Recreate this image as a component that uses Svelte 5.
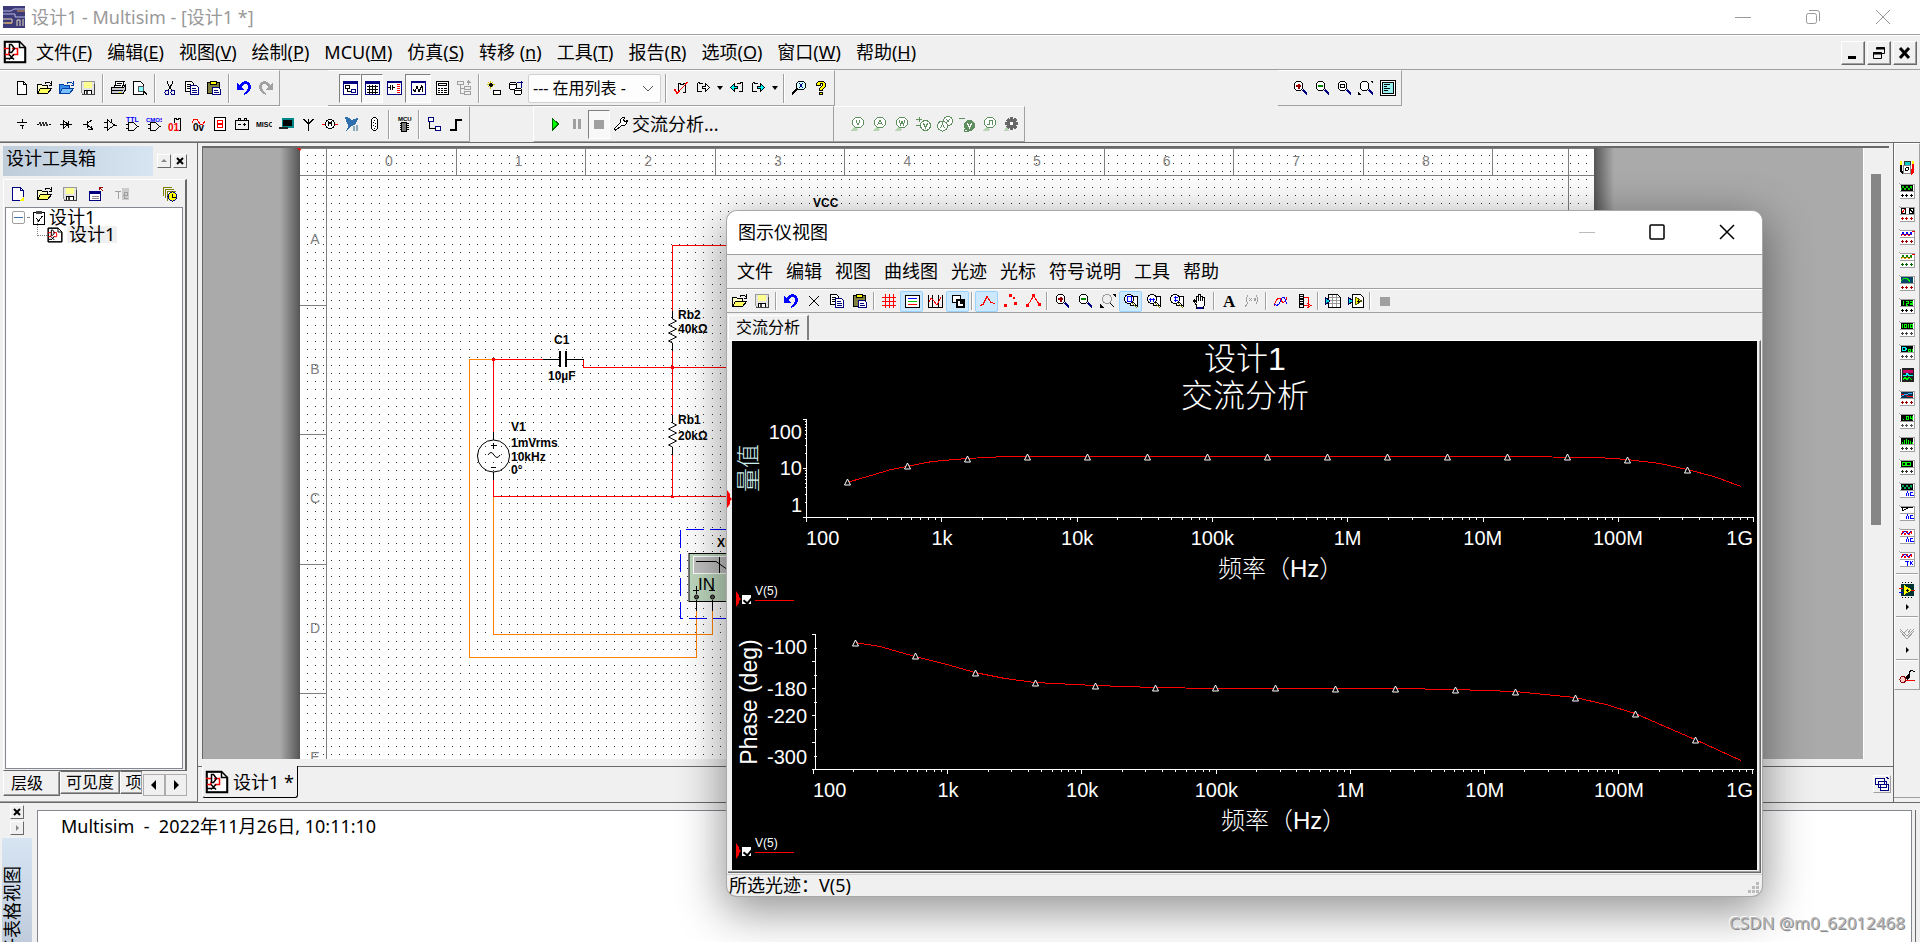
<script lang="ts">
  type Shape = [d: string, fill?: string, stroke?: string];
  type Label = { t: string; x: number; y: number; s: number; c: string };

  const RED = "#f00";
  const NAVY = "#000080";
  const GRAY = "#a0a0a0";
  const GREEN = "#5f8f5f";

  const circle = (x: number, y: number, r: number) =>
    `M${x - r} ${y}a${r} ${r} 0 1 0 ${2 * r} 0a${r} ${r} 0 1 0 ${-2 * r} 0`;

  const lens = (extra: Shape[]): Shape[] => [
    [circle(6.5, 6, 4.5), "#fff", "#000"],
    ["M10 10l1-1l4 4v2h-1l-4-4z", NAVY, "none"],
    ...extra,
  ];

  const pageLens = (extra: Shape[]): Shape[] => [
    ["M7.5 3.5h7v9h-7z", "#fff", "#000"],
    [circle(6, 6, 4.5), "#fff", "#000"],
    ["M9 10l5 5", "none", "#888800"],
    ["M10 9l5 5", "none", "#000"],
    ...extra,
  ];

  const probe = (extra: Shape[]): Shape[] => [
    ["M1 15l5-5l3 4l-2 1z", "#b5d6b0", "none"],
    [circle(9, 6.5, 5.5), "#fff", GREEN],
    ...extra,
  ];

  // front panel of a bench instrument: screen on top, terminals below
  const panel = (screen: string, extra: Shape[]): Shape[] => [
    ["M1 1h15v15h-15z", "#fff", "none"],
    ["M0 0h1v1h-1zM1 1h15v1h-15zM15 1h1v15h-1zM1 15h15v1h-15zM1 8h15v1h-15z", GRAY, "none"],
    ["M2 2h12v6h-12z", screen, "none"],
    ...extra,
  ];
  const pins = (color: string): Shape => [
    "M2 12h3v1h-3zM3 11h1v3h-1zM6 12h3v1h-3zM7 11h1v3h-1zM11 12h3v1h-3zM12 11h1v3h-1z",
    color,
    "none",
  ];
  const wave = "M2 6.5l2-3l2 3l2-3l2 3l2-3l1 2";
  const agilent = "M7 14l1.5-4l1.5 4M14 10.5h-2.5v3h2.5v-1";

  const icons: Record<string, Shape[]> = {
    sheet: [
      ["M1.5 1.5h15l6 6v15h-21z", "#fff", "#000"],
      ["M16.5 1.5v6h6M2 2h15M2 22h20M22 8v14M2 2v20"],
      ["M1 8.5h5M9 8.5h5.5v6h-5M2 14.5h4v-3", "none", RED],
      ["M6.5 4.5h2l3 4l-3 4h-2zM6 14.5l5 5M6 19.5l5-5M2 18.5h5"],
    ],
    new: [["M3.5 1.5h6l3 3v10h-9z", "#fff", "#000"], ["M9.5 1.5v3h3"]],
    newDoc: [["M2.5 1.5h8l3 3v10h-11z", "#fff", NAVY], ["M10.5 1.5v3h3", "none", NAVY], ["M9 15l5-5v5z", "#ff0", "none"]],
    open: [
      ["M1.5 13.5v-9h4l1 1h5v3", "#ffffc8", "#000"],
      ["M1.5 13.5l3-5h11l-4 5z", "#ffff60", "#000"],
      ["M9 3.5l2-1.5h2l2 2M15.5 1v4h-3"],
    ],
    openBlue: [
      ["M1.5 13.5v-9h4l1 1h5v3", "#3a8ce8", "#0040a0"],
      ["M1.5 13.5l3-5h11l-4 5z", "#7cc0ff", "#0040a0"],
      ["M9 3.5l2-1.5h2l2 2M15.5 1v4h-3", "none", "#0040a0"],
    ],
    save: [
      ["M1.5 1.5h13v13h-11l-2-2z", "#e4e4e4", "#999"],
      ["M4 2h8v6h-8z", "#ffff90", "none"],
      ["M4.5 10.5h7v4h-7z", "#fff", "#000"],
      ["M6 11h2v3h-2zM2 14h13v1h-13zM14 4h1v11h-1z", "#444", "none"],
    ],
    print: [
      ["M4.5 7.5l1.5-6h8l-1.5 6", "#fff", "#000"],
      ["M1.5 7.5h12l1.5-2v5l-2 3h-11.5z", "#ccc", "#000"],
      ["M2 10.5h11M4 13.5h8M6.5 3.5h5M6 5.5h5"],
      ["M9 12h2v1h-2z", "#ff0", "none"],
    ],
    preview: [
      ["M1.5 1.5h7l3 3v10h-10z", "#fff", "#000"],
      [circle(9, 9, 3), "#8ff", "#555"],
      ["M11 11l4 4M12 11l3 3"],
    ],
    cut: [["M5.5 1v2l4 7M10.5 1v2l-4 7"], [circle(5, 12.5, 2), "none", NAVY], [circle(11, 12.5, 2), "none", NAVY]],
    copy: [
      ["M1.5 1.5h6l2 2v8h-8z", "#fff", "#000"],
      ["M3 4.5h4M3 6.5h4M3 8.5h4"],
      ["M6.5 5.5h6l2 2v7h-8z", "#fff", NAVY],
      ["M8 8.5h4M8 10.5h5M8 12.5h5", "none", NAVY],
    ],
    paste: [
      ["M1.5 2.5h12v11h-12z", "#808040", "#000"],
      ["M4.5 1.5h6v3h-6z", "#ff0", "#000"],
      ["M6.5 7.5h6l2 2v5h-8z", "#fff", NAVY],
      ["M8 10.5h4M8 12.5h5", "none", NAVY],
    ],
    undo: [["M1 3v7h7l-2-3q1-3 4-3q3 1 2 4q-1 3-4 5v2q6-2 7-7q0-6-5-7q-4 0-6 4z", "#00f", "none"]],
    redo: [["M15 3v7h-7l2-3q-1-3-4-3q-3 1-2 4q1 3 4 5v2q-6-2-7-7q0-6 5-7q4 0 6 4z", GRAY, "none"]],
    toolbox: [
      ["M1.5 1.5h14v13h-14z", "#fff", NAVY],
      ["M1 1h15v3h-15z", NAVY, "none"],
      ["M3.5 5.5h4v3h-4zM5.5 9v2.5h4"],
      ["M9.5 9.5h4v3h-4z", "none", NAVY],
    ],
    grid: [
      ["M1.5 1.5h14v13h-14z", "#fff", NAVY],
      ["M1 1h15v3h-15z", NAVY, "none"],
      ["M3 6.5h11M3 9.5h11M3 12.5h11M5.5 5v9M8.5 5v9M11.5 5v9"],
    ],
    netlist: [
      ["M1.5 1.5h14v13h-14z", "#fff", NAVY],
      ["M1 1h15v2h-15z", NAVY, "none"],
      ["M2 7.5h2M4.5 5v5M6.5 5v5M7 7.5h2"],
      ["M11 4.5h3M11 6.5h3M11 8.5h3M11 10.5h3M11 12.5h3", "none", RED],
    ],
    grapher: [
      ["M1.5 1.5h14v13h-14z", "#fff", NAVY],
      ["M1 1h15v2h-15z", NAVY, "none"],
      ["M3 9.5l2 2l2-5l2 5l3-6v6"],
    ],
    calc: [
      ["M2.5 1.5h12v13h-12z", "#fff", "#000"],
      ["M4.5 3.5h8v2h-8zM4 8.5h2M7 8.5h2M10 8.5h3M4 10.5h2M7 10.5h2M10 10.5h3M4 12.5h2M7 12.5h2M10 12.5h3"],
    ],
    tree: [["M1.5 1.5h6v3h-6zM8.5 6.5h6v3h-6zM8.5 11.5h6v3h-6zM4.5 5v8h4M5 8.5h4M12.5 5v-4M11 2.5l1.5-1.5l2 2", "none", GRAY]],
    spark: [["M4.5 1v8M1 4.5h8M2 2l5 5M7 2l-5 5", "none", "#d0c000"], ["M7.5 10.5h7v4h-7z", "#fff", "#000"], ["M4 3h1v3h-1zM3 4h3v1h-3z"]],
    database: [
      ["M1.5 3.5q3.5-3 7 0v5q-3.5 3-7 0zM1.5 3.5q3.5 3 7 0", "#fff", "#000"],
      ["M6.5 9.5q3.5-3 7 0v4q-3.5 3-7 0zM6.5 9.5q3.5 3 7 0", "#fff", "#000"],
      ["M9 2.5h6M13.5 1v7", "none", NAVY],
    ],
    erc: [["M5.5 11v-8h2v1h3v-1h2v9h-3"], ["M1.5 9l3 4l10-11M1.5 10l3 4", "none", RED]],
    exportSheet: [["M2.5 2.5h2v1h3v-1M2.5 2.5v9h4"], ["M7.5 6.5h3v-3l4 4l-4 4v-3h-3z", "#fff", "#000"]],
    back: [["M14.5 2.5h-2v1h-3v-1M14.5 2.5v9h-4"], ["M9.5 6.5h-3v-3l-4 4l4 4v-3h3z", "#0ff", "#000"]],
    forward: [["M2.5 2.5h2v1h3v-1M2.5 2.5v9h4"], ["M7.5 6.5h3v-3l4 4l-4 4v-3h-3z", "#0ff", "#000"]],
    find: [[circle(10, 5.5, 4.5), "#cff", "#000"], ["M8 3l4 5M12 3l-4 5", "none", NAVY], ["M7 9l-6 6M6 8.5l-5 5"]],
    help: [["M3.5 5.5v-2l2-2h5l2 2v3l-3 3v1h-3v-2l3-3v-2h-2v2zM6.5 12.5h3v2h-3z", "#ff0", "#000"]],
    zoomIn: lens([["M4 5h5v2h-5zM5.5 3.5h2v5h-2z", "#900", "none"]]),
    zoomOut: lens([["M4 5h5v2h-5z", "#080", "none"]]),
    zoomArea: lens([["M4.5 4.5h4v3h-4z"]]),
    zoomFit: lens([["M12 1h3v3zM0 12v3h3z", "#000", "none"]]),
    fullScreen: [["M.5 .5h15v15h-15z", "#fff", "#000"], ["M2.5 2.5h11v11h-11z", "#9ee", "#000"], ["M4 4.5h6M4 6.5h3M4 8.5h6M4 10.5h4"]],

    source: [["M3 6.5h10M6 9.5h4M8.5 3v3M8.5 10v3"]],
    resistor: [["M1 8.5h2M13 8.5h2"], ["M3 8l1-2l1 4l2-4l1 4l2-4l1 4l1-2", "none", "#333"]],
    diode: [["M2 8.5h12M5.5 5v7l5-3.5zM10.5 5v7"]],
    transistor: [["M3 8.5h4M7.5 5v7M12 4l-4 3M8 9.5l5 4M11 10v3h-3"]],
    analog: [["M5.5 4v10l7-5zM2 6.5h3M2 11.5h3M12 9h3M9 3v3"]],
    ttl: [["M4.5 6.5h5l4 4l-4 4h-5zM2 8.5h2M2 12.5h2M13 10.5h2"]],
    cmos: [["M4.5 6.5h5l4 4l-4 4h-5zM2 8.5h2M2 12.5h2M13 10.5h2"]],
    digital: [["M6.5 7v-5h2v1h2v-1h2v12h-2"]],
    mixed: [["M2 7l2-4l3 0l3 5l3 0l2-3", "none", RED]],
    indicator: [["M2.5 1.5h11v13h-11z", "#fff", "#000"], ["M5.5 4.5h5v3h-5zM5.5 8.5h5v3h-5z", "none", RED]],
    power: [["M1.5 4.5h13v9h-13zM4 2.5h2v2h-2zM10 2.5h2v2h-2zM4 8.5h3M9 8.5h3M10.5 7v3"]],
    misc: [],
    peripheral: [["M4 2h12v10h-12z", "#088", "none"], ["M5 4h9v6h-9z", "#000", "none"], ["M1 11h9v2h-9zM5 5h1v1h-1z", "#222", "none"]],
    rf: [["M8.5 3v12M3.5 3l5 5l5-5M3 3.5h2M12 3.5h2"]],
    motor: [[circle(8, 8, 4.5), "#fff", "#000"], ["M6.5 10v-4l1.5 2l1.5-2v4"], ["M0 8.5h3M13 8.5h3", "none", RED]],
    ni: [["M1 1q4 0 6 3l7-2q-1 6-6 8l-6 5q4-6 1-8z", "#2f6fae", "none"], ["M9 10h2v5h-2zM12 9h2v6h-2z", "#8ab", "none"]],
    connector: [
      ["M5.5 3.5q3-4 6 0v9q-3 4-6 0z", "#fff", "#000"],
      ["M8 4h1v1h-1zM7 6h1v1h-1zM9 7h1v1h-1zM7 9h1v1h-1zM9 10h1v1h-1zM8 12h1v1h-1z", "#000", "none"],
    ],
    mcu: [["M4 7.5h9M4 9.5h9M4 11.5h9M4 13.5h9"], ["M5.5 6.5h5v9h-5z", "#777", "#000"]],
    block: [["M2.5 1.5h5v4h-5zM9.5 10.5h5v4h-5z", "#fff", NAVY], ["M3.5 6v6.5h6"]],
    bus: [["M2 13h5v-10h7v2h-5v10h-7z", "#000", "none"]],

    play: [["M5.5 2.5l6 5.5l-6 6z", "#0f0", "#060"]],
    pause: [["M4 3h3v10h-3zM9 3h3v10h-3z", GRAY, "none"]],
    stop: [["M3 4h10v9h-10z", GRAY, "none"]],
    wrench: [["M2.5 14.5l-1-2l6-6v-3l2-2h2l-1 3l2 1l2-1l-1 3l-2 2h-3l-6 5z", "#fff", "#000"]],
    probeV: probe([["M7 4.5l2 4.5l2-4.5", "none", GREEN]]),
    probeA: probe([["M6.5 9l2.5-5l2.5 5M7 7.5h4", "none", GREEN]]),
    probeW: probe([["M6 4.5l1.5 4l1.5-3l1.5 3l1.5-4", "none", GREEN]]),
    probeDiff: [["M1 3.5h6M4 1v5M1 9.5h4", "none", GREEN], [circle(10.5, 9.5, 5), "#fff", GREEN], ["M8.5 7.5l2 4l2-4", "none", GREEN]],
    probeVA: [[circle(11, 5, 4.5), "#fff", GREEN], [circle(5.5, 10, 5), "#fff", GREEN], ["M3.5 12.5l2-5l2 5M9.5 3l1.5 3l1.5-3", "none", GREEN]],
    probeRef: [["M0 2.5h6M5 13h4v2h-4z", "none", GREEN], [circle(10.5, 9.5, 5), GREEN, GREEN], ["M8.5 7.5l2 4l2-4", "none", "#fff"]],
    probeDig: probe([["M6 8.5h2v-4h3v4h1", "none", GREEN]]),
    gear: [
      ["M1 15l3-5l2 5z", "#b5d6b0", "none"],
      ["M7 1h3v2l2-1l2 2l-1 2h2v3h-2l1 2l-2 2l-2-1v2h-3v-2l-2 1l-2-2l1-2h-2v-3h2l-1-2l2-2l2 1z", "#666", "none"],
      [circle(8.5, 7.5, 2), "#fff", "#666"],
    ],

    closeDoc: [["M1.5 5.5h11v9h-11z", "#fff", NAVY], ["M1 5h12v3h-12z", NAVY, "none"], ["M4 10.5h7M4 12.5h7", "none", "#888"], ["M15 5l-3-3M11.5 4v-2.5h3", "none", "#900"]],
    rename: [["M8 2h7v12h-7z", "#ccc", "none"], ["M1 5.5h6M4.5 5v8M9 9.5h4v-3h-3v6h4", "none", GRAY]],
    history: [["M1.5 10v-8.5h8M3.5 12v-8.5h8M5.5 14.5v-9h8", "none", "#808000"], [circle(10.5, 10.5, 4.5), "#ff0", NAVY], ["M10.5 8v3h3"]],
    clipboard: [["M2.5 2.5h11v12h-11z", "#fff", "#000"], ["M5 1h6v3h-6z", "#444", "none"], ["M5 8l2.5 3l4-5"]],

    erase: [["M3 3l10 10M13 3l-10 10"]],
    gridRed: [["M1 4.5h14M1 8.5h14M1 12.5h14M4.5 1v14M8.5 1v14M12.5 1v14", "none", RED]],
    legend: [["M1.5 2.5h14v12h-14z", "#fff", "#000"], ["M4 5.5h9", "none", "#00f"], ["M4 8.5h9", "none", "#0c0"], ["M4 11.5h9", "none", RED]],
    cursors: [["M1.5 2v12.5h14M5.5 2v12M11.5 2v12M15.5 2v12"], ["M2 9l2-4l3 3l3 4l4-8", "none", RED]],
    invert: [["M2.5 2.5h8v7h-8z", "#fff", "#000"], ["M6 6h9v9h-9z", "#000", "none"], ["M8 8h2v3h3v2h-5z", "#fff", "none"]],
    curve: [["M1 12.5l3-1l4-8l4 6l4 1", "none", RED]],
    points: [["M7 1h3v3h-3zM2 11h3v3h-3zM12 9h3v3h-3zM11 4h2v2h-2z", RED, "none"]],
    curvePoints: [["M7 1h3v3h-3zM1 11h3v3h-3zM13 10h3v3h-3z", RED, "none"], ["M3 12l5.5-9l5.5 8", "none", RED]],
    restore: [[circle(7, 6, 4.5), "#eee", "#999"], ["M12 1h4v4zM0 11v4h4z", "#000", "none"], ["M10 10l4 4"]],
    zoomBox: pageLens([["M4 3.5h4v5h-4z", "none", "#00f"]]),
    zoomH: pageLens([["M3 6.5h6M4.5 4.5v4M7.5 4.5v4", "none", "#00f"]]),
    zoomV: pageLens([["M6.5 3v6M4.5 4.5h4M4.5 7.5h4", "none", "#00f"]]),
    pan: [["M4.5 15v-3l-3-4l1-1l2 2v-6h2v-2h2v2h2v1h2v7l-1 4z", "#fff", "#000"], ["M6.5 3v5M8.5 3v5M10.5 4v4"], ["M5 14h6v2h-6z", NAVY, "none"]],
    letter: [],
    coords: [["M4 2q-3 5 0 9M12 2q3 5 0 9M5 5l3 3M8 5l-3 3M10 5l1 3l1-3M1 14l3-4", "none", GRAY]],
    overlay: [["M1 13q4-12 7-6t6-3", "none", RED], ["M1 11q4 3 6-2t4-5l3 7", "none", "#00f"]],
    toSheet: [["M3.5 1.5h4v4h-4zM3.5 6.5h4v4h-4zM3.5 11.5h4v3h-4zM3 3.5h4M3 8.5h4"], ["M8 4.5h4.5v7M8 12.5h5M11 10l4 2.5l-4 2.5", "none", RED]],
    excel: [["M3.5 1.5h9l3 3v10h-12z", "#fff", "#000"], ["M4 4.5h11M4 7.5h11M4 10.5h11M7.5 2v12M11.5 2v12", "none", "#999"], ["M0 4v8l5-4z", "#0dd", "#005"]],
    labview: [["M4.5 1.5h8l3 3v10h-11z", "#fff", "#000"], ["M7 4v8l7-4z", "#ff0", "#550"], ["M0 4v8l5-4z", "#0dd", "#005"], ["M9 8.5h3M10.5 7v3"]],

    multimeter: [
      ["M1 1h2v9l3 4h-3l-2-3z", "#000", "none"],
      ["M1 1h2v4h-2zM13 1h2v3h-2z", "#ff0", "none"],
      ["M13 4h2v8l-3 3z", RED, "none"],
      ["M5 1h6v4h-6z", "#0cc", "#333"],
      ["M4.5 5.5h7v8h-7z", "#fff", "#888"],
      [circle(8, 9, 1.5)],
    ],
    funcGen: panel("#000", [[wave, "none", "#0c0"], pins("#000")]),
    wattmeter: panel("#fff", [["M2.5 2.5h4v5h-4zM10.5 2.5h4v5h-4zM11 3l3 4"], ["M3 7l3-4", "none", RED], pins("#b00")]),
    scope: panel("#fff", [[wave, "none", "#00f"], ["M2 7l2-2l2 2l2-2l2 2l2-2", "none", RED], ["M13 2.5h3", "none", RED], pins("#900")]),
    scope4: panel("#fff", [[wave, "none", "#080"], ["M2 7l2-2l2 2l2-2l2 2l2-2", "none", "#f80"], ["M13 2.5h3", "none", RED], pins("#060")]),
    bode: panel("#046", [["M2 6l3-3h3l3 4", "none", "#0e0"], pins("#a00")]),
    counter: panel("#000", [["M4.5 3v4M7 3.5h2v2h-2v1.5h2M11 3.5h2v3h-2M11 5.5h2", "none", "#0f0"], pins("#000")]),
    wordGen: panel("#000", [["M3.5 3v4M5.5 3.5h2v3h-2zM9.5 3v4M11.5 3.5h2v3h-2z", "none", "#0f0"], pins("#444")]),
    logicConv: panel("#000", [["M3 3.5h3l2 1.5l-2 1.5h-3z", "none", "#0ff"], ["M9.5 5.5h2v2h-2zM13.5 5v3", "none", "#0f0"], pins("#444")]),
    logicAn: [["M3 1h12v14h-12z", "#222", "none"], ["M4 3h10v3h-10z", "#c06", "none"], ["M4 8.5h3l1-2l2 2h4", "none", "#0ff"], ["M4 12.5l2-2l2 2l2-2l3 2", "none", "#0f0"], ["M1 2v13", "none", "#444"]],
    ivAn: panel("#035", [["M2 4.5h4l3 2h5", "none", RED], ["M2 6.5l4-2l7-1", "none", "#4af"], pins("#900")]),
    distortion: panel("#000", [["M4 6.5h1M7.5 3.5h2v3h-2zM11.5 3v2h2M13.5 3v4", "none", "#0f0"], pins("#555")]),
    spectrum: panel("#000", [["M3.5 6v2M5.5 4v4M7.5 3v5M9.5 4v4M11.5 5v3M13.5 6v2", "none", "#0f0"], pins("#333")]),
    network: panel("#000", [[circle(5, 5, 2), "none", "#0f0"], [circle(9.5, 5, 2), "none", "#0f0"], pins("#333")]),
    agGen: panel("#000", [[wave, "none", "#0a5"], [agilent, "none", "#00f"]]),
    agMeter: panel("#fff", [["M3 6l6-3M3 3v3M2 2.5h12"], [agilent, "none", "#00f"]]),
    agScope: panel("#fff", [[wave, "none", RED], ["M3 6l3-3l3 3l3-3", "none", "#00f"], [agilent, "none", "#00f"]]),
    tkScope: panel("#fff", [[wave, "none", RED], ["M3 6l3-3l3 3l3-3", "none", "#00f"], ["M6 10.5h4M8 10.5v4M11.5 10v4M14 10l-2 2l2 2", "none", "#00f"]]),
    labviewInst: [
      ["M2 2h13v12h-13z", "#033", "none"],
      ["M3 .5h1M6 .5h1M9 .5h1M12 .5h1M3 15.5h1M6 15.5h1M9 15.5h1M12 15.5h1"],
      ["M5 3v10l8-5z", "#ff0", "none"],
      ["M0 6.5h4M12 8.5h4", "none", RED],
      ["M0 10.5h4", "none", "#00f"],
      ["M7 8.5h3M8.5 7v3"],
    ],
    nielvis: [["M1 6l7 8l7-8M1 4l7 7l7-7M5 8l4-4M9 8l3-4", "none", GRAY]],
    current: [["M10 5l2-3l2 1h2"], ["M6 10l5-6v5l-3 3z", "#000", "none"], ["M5 12.5h11", "none", RED], [circle(4, 11.5, 3), "#fcc", "#800"]],
    cascade: [["M1.5 2.5h9v6h-9zM4.5 5.5h8v6h-8zM6.5 8.5h8v6h-8z", "#fff", NAVY], ["M12 1l3 2", "none", NAVY]],
  };

  const iconText: Record<string, Label> = {
    ttl: { t: "TTL", x: 2, y: 6, s: 7, c: "#00f" },
    cmos: { t: "CMOS", x: 0, y: 6, s: 6, c: "#00f" },
    misc: { t: "MISC", x: 0, y: 11, s: 7, c: "#000" },
    mcu: { t: "MCU", x: 2, y: 5, s: 6, c: "#000" },
    digital: { t: "01", x: 0, y: 15, s: 10, c: "#f00" },
    mixed: { t: "0v", x: 3, y: 15, s: 10, c: "#000" },
    letter: { t: "A", x: 2, y: 14, s: 17, c: "#000" },
  };

  // "|" separator, "v" drop-down arrow, leading "*" pressed
  const standardTools = "new open openBlue save | print preview | cut copy paste | undo redo".split(" ");
  const viewTools = "*toolbox *grid netlist *grapher calc tree | spark database".split(" ");
  const checkTools = "| erc exportSheet v back forward v | find help".split(" ");
  const zoomTools = "zoomIn zoomOut zoomArea zoomFit fullScreen".split(" ");
  const partTools =
    "source resistor diode transistor analog ttl cmos digital mixed indicator power misc peripheral rf motor ni connector | mcu | block bus".split(" ");
  const runTools = "play pause *stop wrench".split(" ");
  const probeTools = "probeV probeA probeW probeDiff probeVA probeRef probeDig gear".split(" ");
  const instruments =
    "multimeter funcGen wattmeter scope scope4 bode counter wordGen logicConv logicAn ivAn distortion spectrum network agGen agMeter agScope tkScope | labviewInst > | nielvis > | current".split(" ");
  const graphTools =
    "open save | undo erase copy paste | gridRed *legend cursors *invert | *curve points curvePoints | zoomIn zoomOut restore *zoomBox zoomH zoomV pan | letter coords | overlay toSheet | excel labview | stop".split(" ");

  const menus = [
    ["文件(", "F", ")"], ["编辑(", "E", ")"], ["视图(", "V", ")"], ["绘制(", "P", ")"], ["MCU(", "M", ")"], ["仿真(", "S", ")"],
    ["转移 (", "n", ")"], ["工具(", "T", ")"], ["报告(", "R", ")"], ["选项(", "O", ")"], ["窗口(", "W", ")"], ["帮助(", "H", ")"],
  ];
  const graphMenus = ["文件", "编辑", "视图", "曲线图", "光迹", "光标", "符号说明", "工具", "帮助"];

  const CELL = 129.6;
  const cols = Array.from({ length: 9 }, (_, i) => i);
  const rows = ["A", "B", "C", "D", "E"];

  // 81px tile carrying a 10 by 10 grid, so dots stay on whole pixels
  let dots = "";
  for (let i = 0; i < 10; i++) {
    for (let j = 0; j < 10; j++) {
      dots += `M${Math.floor(i * 8.1)} ${Math.floor(j * 8.1)}h1v1h-1z`;
    }
  }

  const px = (v: number) => Math.floor(v) + 0.5;

  function logTicks(x0: number, step: number, y: number) {
    let d = "";
    for (let i = 0; i <= 7; i++) {
      d += `M${px(x0 + i * step)} ${y}v4`;
      if (i === 7) break;
      for (let k = 2; k < 10; k++) {
        d += `M${px(x0 + (i + Math.log10(k)) * step)} ${y}v2`;
      }
    }
    return d;
  }

  let magTicks = "";
  for (let i = 0; i < 3; i++) {
    magTicks += `M803 ${517.5 - i * 49}h4`;
    if (i === 2) break;
    for (let k = 2; k < 10; k++) {
      magTicks += `M805 ${px(517.5 - (i + Math.log10(k)) * 49)}h2`;
    }
  }

  let phaseTicks = "";
  for (let i = 0; i <= 10; i++) {
    phaseTicks += `M${i % 2 ? 814 : 812} ${px(634.5 + i * 13.5)}h3`;
  }

  const decades = ["1k", "10k", "100k", "1M", "10M", "100M"];
  const magMarks = [482, 466, 459, 457, 457, 457, 457, 457, 457, 457, 457, 457, 457, 460, 470];
  const phaseMarks = [643, 656, 673, 683, 686, 688, 688, 688, 689, 689, 690, 692, 698, 714, 740];
  const magCurve =
    "847,483 871,476 891,470 907,467 932,462 967,459 1006,457 1087,457 1507,457 1597,458 1627,460 1660,464 1687,470 1714,477 1741,487";
  const phaseCurve =
    "855,643 880,647 915,657 947,665 975,673 1005,679 1035,683 1095,686 1155,688 1215,689 1395,689 1455,690 1515,692 1575,698 1606,705 1635,714 1695,740 1741,761";

  let inUse = $state("list");
  let magShown = $state(true);
  let phaseShown = $state(true);
</script>

{#snippet icon(name: string)}
  <svg class="icon" viewBox="0 0 16 16" width="16" height="16" aria-hidden="true">
    {#each icons[name] as [d, fill, stroke]}
      <path {d} fill={fill ?? "none"} stroke={stroke ?? "#000"} />
    {/each}
    {#if iconText[name]}
      {@const l = iconText[name]}
      <text x={l.x} y={l.y} font-size={l.s} fill={l.c} class:serif={name === "letter"}>{l.t}</text>
    {/if}
  </svg>
{/snippet}

{#snippet tools(list: string[])}
  {#each list as item}
    {#if item === "|"}
      <span class="sep"></span>
    {:else if item === "v" || item === ">"}
      <button class="drop" aria-label="more">
        <svg viewBox="0 0 8 8" width="8" height="8"><path d={item === "v" ? "M1 2h6l-3 4z" : "M3 1l3 3l-3 3z"} /></svg>
      </button>
    {:else}
      {@const name = item.replace("*", "")}
      <button class="tool" class:pressed={item[0] === "*"} aria-label={name}>{@render icon(name)}</button>
    {/if}
  {/each}
{/snippet}

{#snippet sheetIcon(size: number)}
  <svg viewBox="0 0 24 24" width={size} height={size} aria-hidden="true">
    {#each icons.sheet as [d, fill, stroke]}
      <path {d} fill={fill ?? "none"} stroke={stroke ?? "#000"} stroke-width="1.5" />
    {/each}
  </svg>
{/snippet}

{#snippet legend(top: string)}
  <label class="trace {top}">
    <svg width="5" height="16"><path d="M0 0l3 4v2l2 2l-2 2v2l-3 4z" fill="#f00" /></svg>
    {#if top === "first"}
      <input type="checkbox" bind:checked={magShown} />
    {:else}
      <input type="checkbox" bind:checked={phaseShown} />
    {/if}
    <span>V(5)</span>
  </label>
{/snippet}

<div class="app">
  <header class="titlebar">
    <svg width="22" height="22" viewBox="0 0 22 22" aria-hidden="true">
      <rect width="22" height="22" fill="#3d3a78" />
      <path d="M0 5h8l3-2h11M0 8h12v3h10" stroke="#b8b8e0" fill="none" />
      <path d="M0 13h9v4h-9M14 20v-6h3v6M20 20v-7" stroke="#e6dcc0" fill="none" />
      <path d="M14 5h8M2 17h7" stroke="#e0a040" />
    </svg>
    <h1>设计1 - Multisim - [设计1 *]</h1>
    <div class="win-buttons">
      <button aria-label="minimize"><svg width="16" height="16"><path d="M0 8.5h16" /></svg></button>
      <button aria-label="restore">
        <svg width="16" height="16"><rect x="1.5" y="4.5" width="10" height="10" rx="2" /><path d="M4 1.5h8q2.5 0 2.5 2.5v8" /></svg>
      </button>
      <button aria-label="close"><svg width="16" height="16"><path d="M1 1l14 14M15 1l-14 14" /></svg></button>
    </div>
  </header>

  <nav class="menubar">
    <button class="doc" aria-label="document">{@render sheetIcon(24)}</button>
    {#each menus as [a, key, b]}
      <button>{a}<u>{key}</u>{b}</button>
    {/each}
    <div class="child-buttons">
      <button aria-label="minimize child"><svg width="14" height="14"><path d="M2 10h8v3h-8z" fill="#000" stroke="none" /></svg></button>
      <button aria-label="restore child">
        <svg width="14" height="14"><path d="M4.5 1.5h8v6h-3M1.5 6.5h8v6h-8z" /><path d="M4 2.5h9M1 7.5h9" stroke-width="2" /></svg>
      </button>
      <button aria-label="close child"><svg width="14" height="14"><path d="M2 2l9 10M11 2l-9 10" stroke-width="3" /></svg></button>
    </div>
  </nav>

  <div class="toolbar">
    <div class="group">{@render tools(standardTools)}</div>
    <div class="group view">
      {@render tools(viewTools)}
      <div class="combo">
        <select bind:value={inUse} aria-label="在用列表">
          <option value="list">--- 在用列表 -</option>
        </select>
        <svg width="12" height="8"><path d="M1 1l5 5l5-5" fill="none" stroke="#555" /></svg>
      </div>
      {@render tools(checkTools)}
    </div>
    <div class="group zoom">{@render tools(zoomTools)}</div>
  </div>
  <div class="toolbar">
    <div class="group">{@render tools(partTools)}</div>
    <div class="group run">
      {@render tools(runTools)}
      <button>交流分析...</button>
    </div>
    <div class="group probes">{@render tools(probeTools)}</div>
  </div>

  <div class="workspace">
    <aside class="sidebar">
      <div class="side-head">
        <h2>设计工具箱</h2>
        <button aria-label="collapse"><svg width="8" height="8"><path d="M1 5h6l-3-3z" fill="#888" /></svg></button>
        <button aria-label="close toolbox"><svg width="8" height="8"><path d="M1 1l6 6M7 1l-6 6" stroke="#000" stroke-width="2" /></svg></button>
      </div>
      <div class="side-body">
        <div class="side-tools">
          {@render tools(["newDoc", "open", "save", "closeDoc", "rename"])}
          <span class="fill"></span>
          {@render tools(["history"])}
        </div>
        <ul class="tree">
          <li>
            <button class="twist" aria-label="toggle"><svg width="11" height="11"><path d="M1 5.5h9" stroke="#3f6fb0" /></svg></button>
            <span class="link"></span>{@render icon("clipboard")}<span>设计1</span>
          </li>
          <li class="child"><span class="elbow"></span>{@render sheetIcon(16)}<span class="current">设计1</span></li>
        </ul>
      </div>
      <div class="side-tabs">
        <button class="active">层级</button>
        <button>可见度</button>
        <button class="cut">项</button>
        <span class="fill"></span>
        <button class="arrow" aria-label="previous tab"><svg width="8" height="10"><path d="M6 0v10l-5-5z" /></svg></button>
        <button class="arrow" aria-label="next tab"><svg width="8" height="10"><path d="M2 0v10l5-5z" /></svg></button>
      </div>
    </aside>

    <main class="mdi">
      <div class="canvas">
        <svg class="schematic" role="img" aria-label="schematic">
          <defs>
            <pattern id="dots" width="81" height="81" x="307" y="155" patternUnits="userSpaceOnUse">
              <path d={dots} fill="#333" />
            </pattern>
            <linearGradient id="edge"><stop offset="0" stop-color="#aaa" /><stop offset="1" stop-color="#555" /></linearGradient>
          </defs>
          <g transform="translate(-203 -148)">
            <rect x="280" y="148" width="20" height="612" fill="url(#edge)" />
            <rect x="1594" y="148" width="20" height="612" fill="url(#edge)" transform="rotate(180 1604 454)" />
            <rect x="300" y="148" width="1294" height="612" fill="#fff" />
            <rect x="304" y="152" width="1288" height="612" fill="url(#dots)" />
            <path d="M297 148h5l-2 3z" fill="#f00" />
            <g class="ruler">
              <path d="M300 148.5h1294M300 175.5h1294M326.5 148v612M1568.5 148v612" />
              {#each cols as c}
                <path d="M{px(456 + c * CELL)} 148v27" />
                <text x={389 + c * CELL} y="166">{c}</text>
              {/each}
              {#each rows as r, i}
                <path d="M300 {px(305 + i * CELL)}h26" />
                <text x="315" y={244 + i * CELL}>{r}</text>
              {/each}
            </g>
            <g class="wire orange">
              <path d="M493 359.5h-23.5v298h227v-47M493.5 497v137h219v-23" />
            </g>
            <g class="wire">
              <path d="M493 359.5h50M583.5 359v8.5h145M493.5 359v73M493.5 480v16.5h235M672.5 311v-65.5h56M672.5 351v65M672.5 455v41" />
              <path class="node" d="M492 358h3v3h-3zM671 366h3v3h-3zM671 496h3v2h-3z" />
            </g>
            <g class="part">
              <path d="M543 359.5h16M567 359.5h17M672.5 311v8l4 2l-8 4l8 4l-8 4l8 4l-8 4l4 2v8M672.5 415v8l4 2l-8 4l8 4l-8 4l8 4l-8 4l4 2v8" />
              <path d="M560 351v16M566 351v16" stroke-width="2" />
              <circle cx="493.5" cy="456" r="16" />
              <path d="M493.5 432v8M493.5 472v8M491 445.5h6M493.5 443v6M491 467.5h5M488 455q3-5 6 0t6 0" />
            </g>
            <g class="tag">
              <text x="813" y="207">VCC</text>
              <text x="678" y="319">Rb2</text>
              <text x="678" y="333">40kΩ</text>
              <text x="678" y="424">Rb1</text>
              <text x="678" y="440">20kΩ</text>
              <text x="554" y="344">C1</text>
              <text x="548" y="380">10µF</text>
              <text x="511" y="431">V1</text>
              <text x="511" y="447">1mVrms</text>
              <text x="511" y="461">10kHz</text>
              <text x="511" y="474">0°</text>
              <text x="717" y="547">XBP1</text>
            </g>
            <path d="M800 529.5h-119.5v88.5h119" fill="none" stroke="#00f" stroke-dasharray="18 6" shape-rendering="crispEdges" />
            <rect x="689" y="553.5" width="100" height="48" fill="#bcd6bc" stroke="#000" />
            <rect x="693.5" y="556.5" width="80" height="17" fill="#c0c0c0" stroke="#fff" />
            <g class="part">
              <path d="M696 561.5h20l20 14M719.5 557v16M696.5 586v8M693 590.5h6M709 590.5h6M696.5 600v11M712.5 600v11" />
              <circle cx="696.5" cy="597" r="2" fill="#555" /><circle cx="712.5" cy="597" r="2" fill="#555" />
            </g>
            <text x="698" y="590" class="port">IN</text>
          </g>
        </svg>
        <div class="scroll"><div class="thumb"></div></div>
      </div>
      <div class="doc-tabs">
        <button class="doc-tab">{@render sheetIcon(24)}设计1 *</button>
        <button class="cascade" aria-label="cascade">{@render icon("cascade")}</button>
      </div>
    </main>

    <aside class="instruments"><div class="strip">{@render tools(instruments)}</div></aside>
  </div>

  <section class="log">
    <div class="log-side">
      <button aria-label="close log"><svg width="8" height="8"><path d="M1 1l6 6M7 1l-6 6" stroke="#000" stroke-width="2" /></svg></button>
      <button aria-label="expand log"><svg width="8" height="8"><path d="M3 1v6l3-3z" fill="#888" /></svg></button>
      <div class="caption"><span>电子表格视图</span></div>
    </div>
    <div class="log-body">Multisim&nbsp; -&nbsp; 2022年11月26日, 10:11:10</div>
  </section>

  <div class="grapher" role="dialog" aria-label="图示仪视图">
    <header>
      <h2>图示仪视图</h2>
      <div class="win-buttons">
        <button aria-label="minimize grapher" disabled><svg width="16" height="16"><path d="M0 8.5h16" /></svg></button>
        <button aria-label="maximize grapher"><svg width="16" height="16"><rect x="1" y="1" width="14" height="14" rx="1" stroke-width="1.5" /></svg></button>
        <button aria-label="close grapher"><svg width="16" height="16"><path d="M1 1l14 14M15 1l-14 14" stroke-width="1.5" /></svg></button>
      </div>
    </header>
    <nav>
      {#each graphMenus as m}
        <button>{m}</button>
      {/each}
    </nav>
    <div class="graph-tools">{@render tools(graphTools)}</div>
    <div class="tab-row"><button>交流分析</button></div>
    <div class="frame">
      <div class="plot">
        <svg role="img" aria-label="交流分析">
          <g transform="translate(-732 -341)">
            <text class="big" x="1245" y="370">设计1</text>
            <text class="big" x="1245" y="407">交流分析</text>

            <path class="axis" d="M806.5 419v99M803 517.5h951{magTicks}{logTicks(806.5, 135.3, 518)}" />
            <text class="end" x="802" y="439">100</text>
            <text class="end" x="802" y="475">10</text>
            <text class="end" x="802" y="512">1</text>
            <text x="806" y="545">100</text>
            {#each decades as d, i}
              <text class="mid" x={942 + i * 135.2} y="545">{d}</text>
            {/each}
            <text class="end" x="1753" y="545">1G</text>
            <text class="name" x="1218" y="577">频率（Hz）</text>
            <text class="name mid cool" transform="translate(757 468) rotate(-90)">量值</text>

            <path class="axis" d="M815.5 634v136M812 769.5h942{phaseTicks}{logTicks(813.5, 134.2, 770)}" />
            <text class="end" x="807" y="654">-100</text>
            <text class="end" x="807" y="696">-180</text>
            <text class="end" x="807" y="723">-220</text>
            <text class="end" x="807" y="764">-300</text>
            <text x="813" y="797">100</text>
            {#each decades as d, i}
              <text class="mid" x={948 + i * 134.2} y="797">{d}</text>
            {/each}
            <text class="end" x="1753" y="797">1G</text>
            <text class="name" x="1221" y="829">频率（Hz）</text>
            <text class="phase mid" transform="translate(757 702) rotate(-90)">Phase (deg)</text>

            {#if magShown}
              <polyline points={magCurve} transform="translate(0 -.5)" />
              {#each magMarks as y, i}
                <path class="mark" d="M{847.5 + i * 60} {y - 3}l-3 6h6z" />
              {/each}
            {/if}
            {#if phaseShown}
              <polyline points={phaseCurve} transform="translate(0 -.5)" />
              {#each phaseMarks as y, i}
                <path class="mark" d="M{855.5 + i * 60} {y - 3}l-3 6h6z" />
              {/each}
            {/if}
          </g>
        </svg>
        {@render legend("first")}
        {@render legend("second")}
        <svg class="selected" width="5" height="18"><path d="M0 0l3 4v3l2 2l-2 2v3l-3 4z" fill="#f00" /></svg>
      </div>
    </div>
    <footer>
      所选光迹：V(5)
      <svg width="12" height="12"><path d="M9 0h3v3h-3zM9 4h3v3h-3zM5 4h3v3h-3zM9 8h3v3h-3zM5 8h3v3h-3zM1 8h3v3h-3z" fill="#bbb" /></svg>
    </footer>
  </div>

  <div class="watermark">CSDN @m0_62012468</div>
</div>

<style>
  :global(body) {
    overflow: hidden;
  }

  .app {
    position: relative;
    display: flex;
    flex-direction: column;
    height: 100vh;
    overflow: hidden;
    background: #f0f0f0;
    color: #000;
    font: 18px/24px "Noto Sans", "Noto Sans CJK SC", sans-serif;
  }

  .app * {
    box-sizing: border-box;
  }

  button {
    padding: 0;
    border: 0;
    background: none;
    color: inherit;
    font: inherit;
    white-space: nowrap;
  }

  svg {
    display: block;
    flex: none;
  }

  h1,
  h2 {
    margin: 0;
    font-size: 18px;
    font-weight: 400;
  }

  .icon {
    shape-rendering: crispEdges;
  }

  .icon text {
    font-family: "Liberation Sans", sans-serif;
    font-weight: 700;
  }

  .icon .serif {
    font-family: "Liberation Serif", serif;
  }

  .fill {
    flex: 1;
  }

  .titlebar {
    display: flex;
    align-items: center;
    gap: 6px;
    height: 35px;
    padding: 0 2px 0 3px;
    border-bottom: 1px solid #a0a0a0;
    background: #fff;
    color: #999;
  }

  .win-buttons {
    display: flex;
    margin-left: auto;
  }

  .win-buttons button {
    display: grid;
    place-items: center;
    width: 70px;
    height: 32px;
  }

  .win-buttons svg {
    fill: none;
    stroke: currentColor;
  }

  .menubar {
    display: flex;
    align-items: center;
    gap: 15px;
    height: 35px;
    padding: 0 3px 2px;
    border-top: 1px solid #fff;
    border-bottom: 1px solid #a0a0a0;
  }

  .menubar .doc {
    margin-right: -6px;
  }

  .child-buttons {
    display: flex;
    gap: 2px;
    margin-left: auto;
    padding-top: 2px;
  }

  .child-buttons button {
    display: grid;
    place-items: center;
    width: 24px;
    height: 24px;
    border: 1px solid;
    border-color: #fff #696969 #696969 #fff;
    box-shadow: inset -1px -1px #a0a0a0;
  }

  .child-buttons svg {
    fill: none;
    stroke: #000;
  }

  .toolbar {
    display: flex;
    height: 36px;
  }

  .toolbar:nth-of-type(2) {
    height: 37px;
    border-bottom: 1px solid #696969;
  }

  .group {
    display: flex;
    align-items: center;
    padding: 0 2px 0 11px;
    border: 1px solid;
    border-color: #fff #a0a0a0 #a0a0a0 transparent;
    border-left: 0;
  }

  .view {
    margin-left: 48px;
  }

  .zoom {
    margin-left: 443px;
  }

  .run {
    width: 301px;
    margin-left: 63px;
    border-left: 1px solid #fff;
    padding-left: 10px;
  }

  .probes {
    padding-left: 12px;
  }

  .tool {
    display: grid;
    place-items: center;
    width: 22px;
    height: 29px;
  }

  .toolbar .pressed {
    border: 1px solid;
    border-color: #808080 #fff #fff #808080;
    background: #f8f8f8;
  }

  .view .pressed:nth-of-type(4) {
    width: 26px;
  }

  .drop {
    display: grid;
    place-items: center;
    width: 11px;
    height: 29px;
  }

  .sep {
    width: 2px;
    height: 29px;
    margin: 0 3px;
    border-left: 1px solid #a0a0a0;
    border-right: 1px solid #fff;
  }

  .combo {
    position: relative;
    margin: 0 1px;
  }

  .combo select {
    display: block;
    width: 133px;
    height: 29px;
    padding: 0 24px 0 4px;
    border: 1px solid #d0d0d0;
    border-radius: 2px;
    background: #fdfdfd;
    color: #000;
    font: 16px "Noto Sans", "Noto Sans CJK SC", sans-serif;
    appearance: none;
  }

  .combo svg {
    position: absolute;
    right: 7px;
    top: 11px;
    pointer-events: none;
  }

  .workspace {
    display: flex;
    flex: 1;
    min-height: 0;
  }

  .sidebar {
    display: flex;
    flex-direction: column;
    width: 198px;
    padding: 3px 10px 5px 3px;
    border-right: 1px solid #696969;
    border-bottom: 1px solid #a0a0a0;
  }

  .side-head {
    display: flex;
    align-items: center;
    gap: 2px;
    height: 30px;
    margin-bottom: 3px;
  }

  .side-head h2 {
    flex: 1;
    height: 30px;
    margin-right: 2px;
    padding-left: 3px;
    background: linear-gradient(90deg, #bfcddb, #d7e4f2);
  }

  .side-head button,
  .log-side button {
    display: grid;
    flex: none;
    place-items: center;
    width: 14px;
    height: 14px;
    border: 1px solid;
    border-color: #fff #696969 #696969 #fff;
  }

  .side-body {
    display: flex;
    flex-direction: column;
    flex: 1;
    padding: 1px 2px 1px 1px;
    border: 1px solid;
    border-color: #fff #696969 #696969 #fff;
    border-right-width: 2px;
  }

  .side-tools {
    display: flex;
    align-items: center;
    height: 26px;
  }

  .side-tools .tool {
    width: 26px;
  }

  .tree {
    flex: 1;
    margin: 0;
    padding: 1px 0 0 6px;
    border: 1px solid #828790;
    background: #fff;
    list-style: none;
  }

  .tree li {
    display: flex;
    align-items: center;
    gap: 2px;
    height: 17px;
    line-height: 17px;
  }

  .tree .child {
    padding-left: 25px;
  }

  .tree .current {
    margin-left: 2px;
    padding: 0 2px;
    background: #f0f0f0;
  }

  .twist {
    width: 13px;
    height: 13px;
    border: 1px solid #a0a0a0;
    border-radius: 2px;
  }

  .link {
    width: 2px;
    border-top: 1px dotted #808080;
  }

  .elbow {
    width: 12px;
    height: 16px;
    margin: -14px -4px 0 0;
    border-left: 1px dotted #808080;
    border-bottom: 1px dotted #808080;
  }

  .side-tabs {
    display: flex;
    height: 25px;
    font-size: 16px;
    line-height: 20px;
  }

  .side-tabs button {
    height: 23px;
    padding: 0 5px 2px;
    border: 1px solid;
    border-color: #696969 #696969 #696969 #fff;
    box-shadow: inset -1px -1px #a0a0a0;
  }

  .side-tabs .active {
    height: 25px;
    padding: 0 16px 2px 7px;
    border-top-color: transparent;
    line-height: 22px;
  }

  .side-tabs .cut {
    width: 22px;
    padding: 0 0 2px 4px;
    border-right: 0;
    overflow: hidden;
  }

  .side-tabs .arrow {
    display: grid;
    place-items: center;
    width: 22px;
    height: 22px;
    margin-top: 3px;
    padding: 0;
    border: 1px solid #adadad;
    box-shadow: none;
  }

  .mdi {
    display: flex;
    flex-direction: column;
    flex: 1;
    min-width: 0;
    padding: 3px 4px 0 4px;
    border-right: 1px solid #696969;
  }

  .canvas {
    display: flex;
    flex: 1;
    min-height: 0;
    margin-bottom: 7px;
    border-top: 2px solid #696969;
    border-left: 1px solid #696969;
    background: #aaa;
  }

  .schematic {
    flex: 1;
    width: 0;
    height: 100%;
  }

  .ruler path {
    stroke: #808080;
  }

  .ruler text {
    fill: #808080;
    font: 14px "Liberation Sans", sans-serif;
    text-anchor: middle;
  }

  .wire {
    shape-rendering: crispEdges;
  }

  .wire path {
    fill: none;
    stroke: #f00;
  }

  .wire .node {
    fill: #f00;
    stroke: none;
  }

  .orange path {
    stroke: #ff8000;
  }

  .part {
    fill: none;
    stroke: #000;
  }

  .tag text {
    font: 700 12px "Liberation Sans", sans-serif;
  }

  .port {
    font: 17px "Liberation Sans", sans-serif;
  }

  .scroll {
    width: 26px;
    padding: 26px 8px 0 7px;
    border-left: 1px solid #fff;
    background: #f0f0f0;
  }

  .thumb {
    height: 351px;
    background: #868686;
  }

  .doc-tabs {
    display: flex;
    align-items: flex-start;
    justify-content: space-between;
    height: 36px;
    margin: 0 -4px;
    padding: 0 2px 0 4px;
    border-top: 1px solid #696969;
  }

  .doc-tab {
    display: flex;
    align-items: center;
    gap: 4px;
    height: 32px;
    margin-top: -1px;
    padding: 0 3px 0 2px;
    border: 1px solid #000;
    border-top: 0;
    border-left-color: #fff;
    border-radius: 0 0 3px 3px;
    background: #f0f0f0;
  }

  .cascade {
    margin-top: 8px;
    border: 1px solid;
    border-color: #fff #a0a0a0 #a0a0a0 #fff;
  }

  .instruments {
    width: 26px;
    border-bottom: 1px solid #a0a0a0;
    margin-bottom: 4px;
  }

  .strip {
    display: flex;
    flex-direction: column;
    align-items: center;
    padding: 12px 0 2px;
    border: 1px solid;
    border-color: #fff #a0a0a0 #a0a0a0 #fff;
  }

  .strip .tool {
    height: 23px;
  }

  .strip .drop {
    height: 12px;
  }

  .strip .sep {
    width: 22px;
    height: 2px;
    margin: 3px 0;
    border: 0;
    border-top: 1px solid #a0a0a0;
    border-bottom: 1px solid #fff;
  }

  .log {
    display: flex;
    height: 140px;
    padding: 0 8px 0 2px;
    border-top: 1px solid #696969;
  }

  .log-side {
    display: flex;
    flex-direction: column;
    align-items: center;
    gap: 2px;
    width: 35px;
    padding: 2px 5px 0 0;
  }

  .caption {
    align-self: stretch;
    flex: 1;
    min-height: 0;
    margin-top: 1px;
    padding-top: 28px;
    overflow: hidden;
    background: linear-gradient(#d7e4f2, #c0ccdc);
  }

  .caption span {
    display: block;
    width: 20px;
    line-height: 20px;
    white-space: nowrap;
    writing-mode: vertical-rl;
    text-orientation: sideways;
    transform: rotate(180deg);
  }

  .log-body {
    flex: 1;
    margin-top: 7px;
    padding: 3px 0 0 23px;
    border: 1px solid #828790;
    border-bottom: 0;
    background: #fff;
    box-shadow: 3px 0 0 #f0f0f0, 4px 0 0 #696969;
  }

  .grapher {
    position: absolute;
    top: 211px;
    left: 727px;
    display: flex;
    flex-direction: column;
    width: 1035px;
    border-radius: 10px;
    background: #f0f0f0;
    box-shadow: 0 0 0 1px #a8a8a8, 0 12px 46px 4px rgba(0, 0, 0, 0.42);
  }

  .grapher header {
    display: flex;
    align-items: center;
    height: 44px;
    padding: 0 0 2px 11px;
    border-bottom: 1px solid #a0a0a0;
    border-radius: 10px 10px 0 0;
    background: #fff;
  }

  .grapher [disabled] {
    color: #bbb;
  }

  .grapher nav {
    display: flex;
    align-items: center;
    gap: 13px;
    height: 34px;
    padding: 0 0 2px 10px;
    border-bottom: 1px solid #a0a0a0;
  }

  .graph-tools {
    display: flex;
    align-items: center;
    height: 24px;
    border-top: 1px solid #fff;
    border-bottom: 1px solid #a0a0a0;
  }

  .graph-tools .tool {
    width: 23px;
    height: 21px;
  }

  .graph-tools .pressed {
    border: 1px solid #99d1ff;
    border-radius: 2px;
    background: #cce8ff;
  }

  .graph-tools .sep {
    height: 18px;
    margin: 0 2px;
  }

  .tab-row {
    height: 27px;
    padding: 1px 0 0 1px;
  }

  .tab-row button {
    height: 26px;
    padding: 0 7px 2px;
    border-right: 2px solid #808080;
    border-top: 1px solid #fff;
    border-left: 1px solid #fff;
    font-size: 16px;
    line-height: 22px;
  }

  .frame {
    margin: 0 1px;
    padding: 0 3px 2px 4px;
    border-right: 1px solid #696969;
    border-bottom: 1px solid #696969;
    border-top: 1px solid #fff;
    box-shadow: inset -1px -1px #a0a0a0;
  }

  .plot {
    position: relative;
    background: #000;
  }

  .plot > svg:first-child {
    width: 100%;
    height: 529px;
  }

  .plot text {
    fill: #fff;
    font: 20px "Liberation Sans", "Noto Sans CJK SC", sans-serif;
  }

  .plot .big {
    font-size: 32px;
    font-weight: 300;
  }

  .plot .name {
    font-size: 24px;
    font-weight: 300;
  }

  .plot .phase {
    font-size: 23px;
  }

  .plot .cool {
    fill: #cfeeee;
  }

  .mid,
  .big {
    text-anchor: middle;
  }

  .end {
    text-anchor: end;
  }

  .axis {
    fill: none;
    stroke: #fff;
    shape-rendering: crispEdges;
  }

  .plot polyline {
    fill: none;
    stroke: #f00;
    shape-rendering: crispEdges;
  }

  .mark {
    fill: #000;
    stroke: #fff;
  }

  .trace {
    position: absolute;
    left: 4px;
    top: 250px;
    display: flex;
    align-items: center;
    gap: 1px;
    height: 16px;
    color: #fff;
    font: 12px/16px "Liberation Sans", sans-serif;
  }

  .second {
    top: 502px;
  }

  .trace input {
    position: relative;
    width: 9px;
    height: 9px;
    margin: 0;
    background: #fff;
    appearance: none;
  }

  .trace input:checked::after {
    content: "";
    position: absolute;
    left: 3px;
    top: 0;
    width: 4px;
    height: 7px;
    border: solid #000;
    border-width: 0 2px 2px 0;
    transform: rotate(40deg);
  }

  .trace span {
    width: 39px;
    height: 18px;
    margin: -14px 0 0 3px;
    border-bottom: 1px solid #f00;
  }

  .selected {
    position: absolute;
    left: -5px;
    top: 149px;
  }

  .grapher footer {
    display: flex;
    align-items: flex-end;
    justify-content: space-between;
    height: 22px;
    margin-top: 1px;
    padding: 0 3px 2px 2px;
    border-top: 1px solid #d0d0d0;
    line-height: 18px;
  }

  .watermark {
    position: absolute;
    right: 15px;
    bottom: 7px;
    color: #b4b4b4;
    text-shadow: 1px 1px #888, -1px -1px #fff;
    font-size: 17px;
  }
</style>
